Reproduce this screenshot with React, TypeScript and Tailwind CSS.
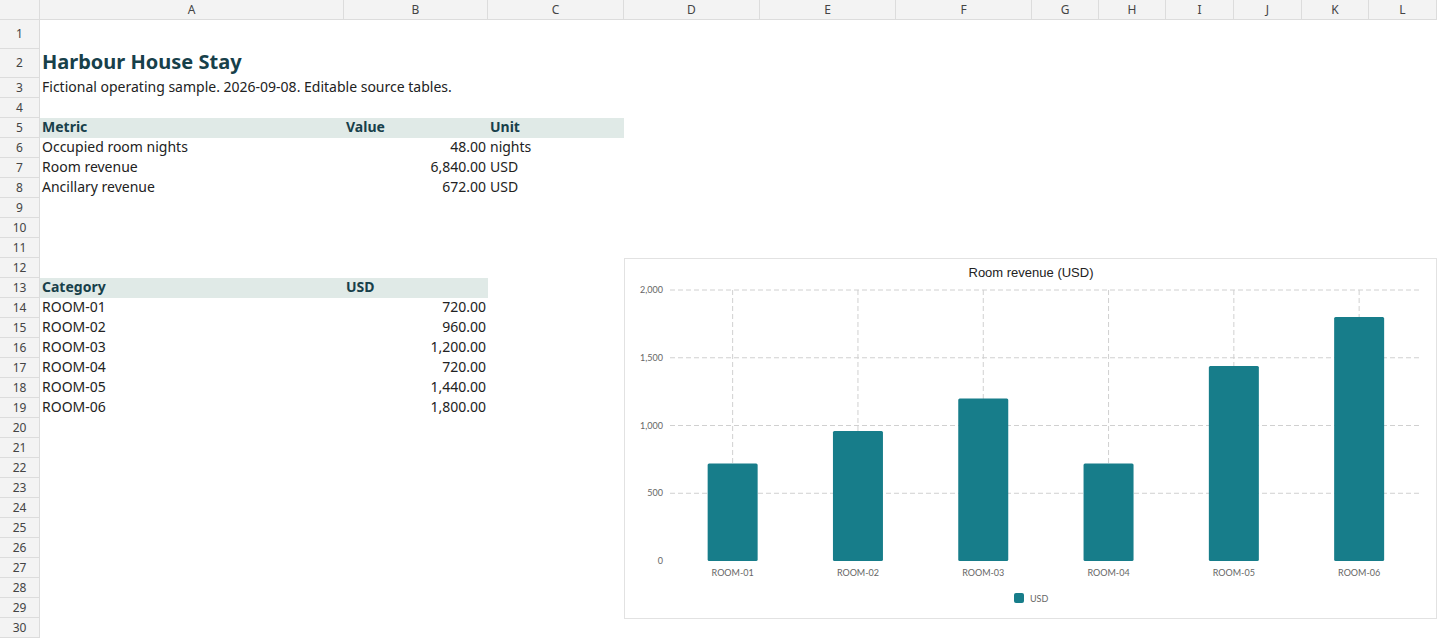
const cols: [string, number][] = [
  ['A', 304], ['B', 144], ['C', 136], ['D', 136], ['E', 136], ['F', 136],
  ['G', 67], ['H', 67], ['I', 68], ['J', 68], ['K', 67], ['L', 68],
]

type Cell = { text: string; bold?: boolean; right?: boolean; fill?: boolean; cls?: string }

const rowHeights = (r: number) => (r === 1 || r === 2 ? 29 : 20)

const data: Record<number, Cell[]> = {
  2: [{ text: 'Harbour House Stay', cls: 'text-[20px] font-bold text-[#17404a]' }],
  3: [{ text: 'Fictional operating sample. 2026-09-08. Editable source tables.' }],
  5: [{ text: 'Metric', bold: true, fill: true }, { text: 'Value', bold: true, fill: true }, { text: 'Unit', bold: true, fill: true }],
  6: [{ text: 'Occupied room nights' }, { text: '48.00', right: true }, { text: 'nights' }],
  7: [{ text: 'Room revenue' }, { text: '6,840.00', right: true }, { text: 'USD' }],
  8: [{ text: 'Ancillary revenue' }, { text: '672.00', right: true }, { text: 'USD' }],
  13: [{ text: 'Category', bold: true, fill: true }, { text: 'USD', bold: true, fill: true }],
  14: [{ text: 'ROOM-01' }, { text: '720.00', right: true }],
  15: [{ text: 'ROOM-02' }, { text: '960.00', right: true }],
  16: [{ text: 'ROOM-03' }, { text: '1,200.00', right: true }],
  17: [{ text: 'ROOM-04' }, { text: '720.00', right: true }],
  18: [{ text: 'ROOM-05' }, { text: '1,440.00', right: true }],
  19: [{ text: 'ROOM-06' }, { text: '1,800.00', right: true }],
}

const bars = [720, 960, 1200, 720, 1440, 1800]

function Chart() {
  const left = 45
  const top = 31
  const h = 271
  const step = 125.3
  const y = (v: number) => top + h - (v / 2000) * h
  return (
    <div className="absolute left-[624px] top-[258px] h-[361px] w-[813px] border border-[#e2e2e2] bg-white">
      <svg width="811" height="359" className="block">
        <text x="406" y="18" textAnchor="middle" fontSize="13" fill="#222" fontFamily="Liberation Sans, Arial, sans-serif">Room revenue (USD)</text>
        {[0, 500, 1000, 1500, 2000].map((v) => (
          <g key={v}>
            {v > 0 && <line x1={left} x2={796} y1={y(v)} y2={y(v)} stroke="#d0d0d0" strokeDasharray="5 3" />}
            <text x={left - 7} y={y(v) + 3} textAnchor="end" fontSize="9" fill="#666" fontFamily="Lato, sans-serif">{v.toLocaleString('en-US')}</text>
          </g>
        ))}
        {bars.map((v, i) => {
          const cx = left + step * (i + 0.5)
          return (
            <g key={i}>
              <line x1={cx} x2={cx} y1={top} y2={top + h} stroke="#d0d0d0" strokeDasharray="5 3" />
              <rect x={cx - 25} y={y(v)} width="50" height={top + h - y(v)} rx="1.5" fill="#177d8a" />
              <text x={cx} y={top + h + 15} textAnchor="middle" fontSize="9" fill="#666" fontFamily="Lato, sans-serif">ROOM-0{i + 1}</text>
            </g>
          )
        })}
        <rect x="389" y="334" width="10" height="10" rx="2" fill="#177d8a" />
        <text x="405" y="343" fontSize="9" fill="#666" fontFamily="Lato, sans-serif">USD</text>
      </svg>
    </div>
  )
}

export default function App() {
  const rows = Array.from({ length: 30 }, (_, i) => i + 1)
  return (
    <div className="relative h-[639px] w-[1437px] overflow-hidden bg-white font-['Liberation_Sans',Arial,sans-serif] text-[14px] text-[#222]">
      <div className="flex h-[20px] border-b border-[#dcdcdc] bg-[#f3f3f3] text-[12px] text-[#444]">
        <div className="w-[40px] shrink-0 border-r border-[#dcdcdc]" />
        {cols.map(([c, w]) => (
          <div key={c} style={{ width: w }} className="flex shrink-0 items-center justify-center border-r border-[#dcdcdc]">{c}</div>
        ))}
      </div>
      {rows.map((r) => {
        const cells = data[r] || []
        return (
          <div key={r} style={{ height: rowHeights(r) }} className="flex">
            <div className="flex w-[40px] shrink-0 items-center justify-center border-r border-b border-[#dcdcdc] bg-[#f3f3f3] text-[12px] text-[#444]">{r}</div>
            {cols.slice(0, 3).map(([c, w], ci) => {
              const cell = cells[ci]
              return (
                <div
                  key={c}
                  style={{ width: w }}
                  className={`flex shrink-0 items-end overflow-visible whitespace-nowrap px-[2px] pb-[1px] ${cell?.fill ? 'bg-[#e0eae7] text-[#17404a]' : ''} ${cell?.bold ? 'font-bold' : ''} ${cell?.right ? 'justify-end' : ''} ${cell?.cls ?? ''}`}
                >
                  {cell?.text}
                </div>
              )
            })}
          </div>
        )
      })}
      <Chart />
    </div>
  )
}
